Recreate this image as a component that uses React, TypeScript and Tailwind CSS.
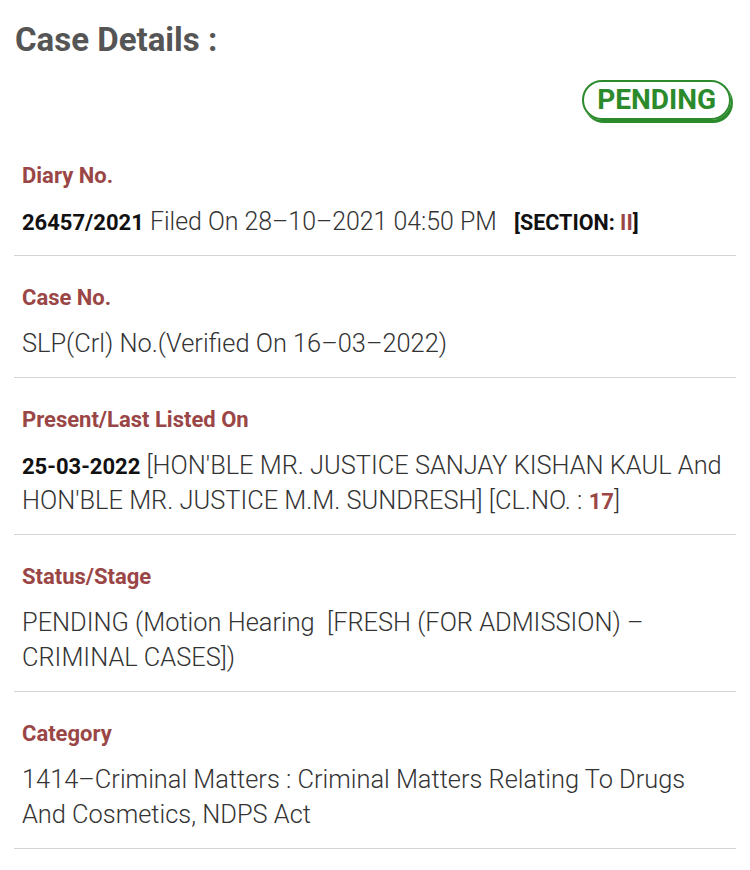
const LABEL = "text-[22px] font-bold leading-[28px] text-[#9a4646]";
const VALUE = "mt-[14px] text-[25.4px] font-light leading-[35px] text-[#333]";
const STRONG = "text-[22px] font-bold leading-none text-[#111]";

function Section({
  label,
  first = false,
  children,
}: {
  label: string;
  first?: boolean;
  children: React.ReactNode;
}) {
  return (
    <div
      className={`border-b border-[#d4d4d4] pl-2 pr-2 pb-[16px] ${first ? "pt-[42px]" : "pt-[28px]"}`}
    >
      <div className={LABEL}>{label}</div>
      <div className={VALUE}>{children}</div>
    </div>
  );
}

export default function App() {
  return (
    <div
      className="min-h-[870px] w-[750px] bg-white px-[14px] pt-[22px]"
      style={{ fontFamily: "Roboto, 'Noto Sans', sans-serif" }}
    >
      {/* Header */}
      <h1 className="pl-[1px] text-[33px] font-bold leading-[36px] text-[#555]">
        Case Details :
      </h1>
      <div className="mt-[22px] flex justify-end pr-[5px]">
        <span className="rounded-full border-2 border-[#2b8a2b] px-[13px] text-[28px] font-bold leading-[36px] text-[#2b8a2b] shadow-[2px_3px_0_#2b8a2b]">
          PENDING
        </span>
      </div>

      <Section label="Diary No." first>
        <span className={STRONG}>26457/2021</span>{" "}
        <span className="text-[24.9px]">Filed On 28–10–2021 04:50 PM</span>{" "}
        <span className="ml-[11px] text-[21.5px] font-bold leading-none text-[#111]">
          [SECTION: <span className="text-[#9a4646]">II</span>]
        </span>
      </Section>

      <Section label="Case No.">SLP(Crl) No.(Verified On 16–03–2022)</Section>

      <Section label="Present/Last Listed On">
        <span className={STRONG}>25-03-2022</span> [HON'BLE MR. JUSTICE SANJAY
        KISHAN KAUL And HON'BLE MR. JUSTICE M.M. SUNDRESH] [CL.NO. :{" "}
        <span className="text-[22px] font-bold leading-none text-[#9a4646]">17</span>]
      </Section>

      <Section label="Status/Stage">
        PENDING (Motion Hearing&nbsp; [FRESH (FOR ADMISSION) – CRIMINAL CASES])
      </Section>

      <Section label="Category">
        1414–Criminal Matters : Criminal Matters Relating To Drugs And
        Cosmetics, NDPS Act
      </Section>
    </div>
  );
}
